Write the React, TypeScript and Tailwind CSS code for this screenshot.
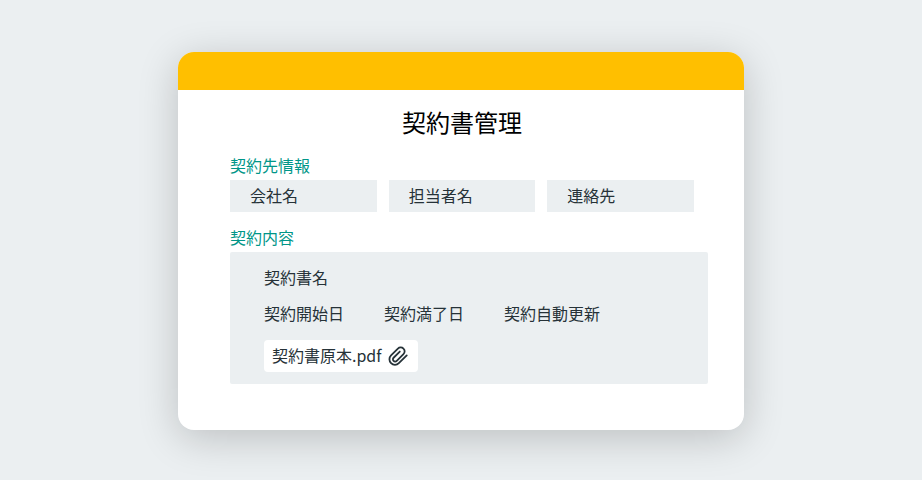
import React from 'react';

const PARTNER_FIELDS = ['会社名', '担当者名', '連絡先'];
const CONTRACT_FIELDS = ['契約開始日', '契約満了日', '契約自動更新'];

interface SectionTitleProps {
  children: React.ReactNode;
}

function SectionTitle({ children }: SectionTitleProps) {
  return <h2 className="text-base leading-[22px] text-[#009688]">{children}</h2>;
}

function ClipIcon() {
  return (
    <svg
      className="size-5 overflow-visible"
      viewBox="0.5 -0.5 19 19"
      fill="none"
      stroke="currentColor"
      strokeWidth="1.7"
      strokeLinecap="round"
      strokeLinejoin="round"
      aria-hidden="true"
    >
      <path d="M18.3 9.4 10.8 16.8a5.2 5.2 0 0 1-7.4 0a5.2 5.2 0 0 1 0-7.4L9.9 2.9a3.7 3.7 0 0 1 5.3 0a3.7 3.7 0 0 1 0 5.3L8.8 14.6a2.1 2.1 0 0 1-3 0a2.1 2.1 0 0 1 0-3L11.7 5.7" />
    </svg>
  );
}

export default function App() {
  return (
    <div className="flex min-h-screen items-center justify-center bg-[#ebeff1] px-4 pt-[52px] pb-[50px] font-['Noto_Sans_CJK_JP',sans-serif] text-[#263238]">
      <main className="w-full max-w-[566px] overflow-hidden rounded-2xl bg-white pb-[46px] shadow-[0_8px_40px_rgba(0,0,0,0.2)]">
        <div className="h-[38px] bg-[#ffbf00]" />
        <h1 className="mt-3.5 pl-0.5 text-center text-2xl leading-9 text-black">契約書管理</h1>

        <section className="mt-3.5 pr-[50px] pl-[52px]">
          <SectionTitle>契約先情報</SectionTitle>
          <ul className="mt-1 grid grid-cols-3 gap-3">
            {PARTNER_FIELDS.map((field) => (
              <li key={field} className="bg-[#ebeff1] px-5 pt-1 pb-1.5 leading-[22px]">
                {field}
              </li>
            ))}
          </ul>
        </section>

        <section className="mt-3.5 pr-9 pl-[52px]">
          <SectionTitle>契約内容</SectionTitle>
          <div className="mt-1 rounded-xs bg-[#ebeff1] px-[34px] pt-3.5 pb-3 leading-[22px]">
            <p>契約書名</p>
            <ul className="mt-3.5 flex gap-10">
              {CONTRACT_FIELDS.map((field) => (
                <li key={field}>{field}</li>
              ))}
            </ul>
            <div className="mt-4 flex w-fit items-center gap-1.5 rounded bg-white pt-1 pr-2.5 pb-1.5 pl-2">
              <span>契約書原本.pdf</span>
              <ClipIcon />
            </div>
          </div>
        </section>
      </main>
    </div>
  );
}
